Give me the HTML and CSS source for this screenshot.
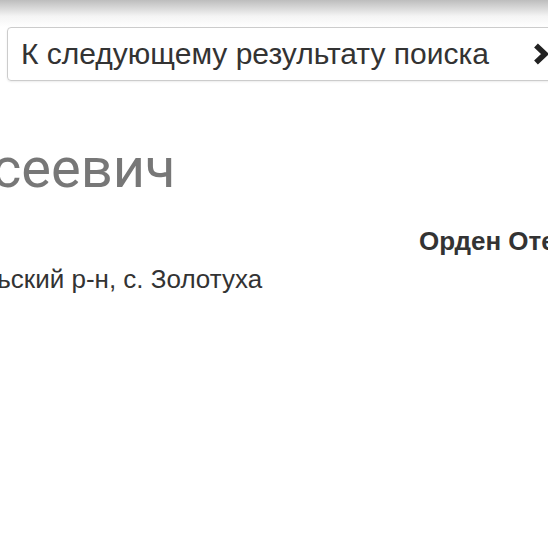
FILE: index.html
```html
<!DOCTYPE html>
<html lang="ru">
<head>
    <meta charset="UTF-8">
    <title>Результаты поиска</title>
    <link rel="stylesheet" href="styles.css">
</head>
<body>
    <div class="top-shadow"></div>

    <div class="pager">
        <a href="#" class="next-btn">К следующему результату поиска
            <svg class="chevron" width="16" height="22" viewBox="0 0 16 22"><path d="M3 2.5 L12 11 L3 19.5" fill="none" stroke="#222" stroke-width="5.5"/></svg>
        </a>
    </div>

    <div class="person">
        <div class="person-main">
            <h1 class="person-name">Алексеевич</h1>
            <p class="person-place">Курская обл., Рыльский р-н, с. Золотуха</p>
        </div>
        <div class="person-awards">
            <p class="award">Орден Отечественной войны II степени</p>
        </div>
    </div>
</body>
</html>
```

FILE: styles.css
```css
* {
    margin: 0;
    padding: 0;
    box-sizing: border-box;
}

body {
    font-family: "Liberation Sans", Arial, sans-serif;
    color: #333;
    background: #fff;
    width: 548px;
    height: 548px;
    overflow: hidden;
}

.top-shadow {
    height: 27px;
    background: linear-gradient(#bdbdbd, #f4f4f4 60%, #fff);
}

.pager {
    padding-left: 7px;
    white-space: nowrap;
}

.next-btn {
    display: inline-flex;
    align-items: center;
    gap: 44px;
    height: 54px;
    padding: 0 30px 0 13px;
    border: 1px solid #ccc;
    border-radius: 4px;
    box-shadow: 0 1px 2px rgba(0,0,0,0.08);
    font-size: 30px;
    color: #333;
    text-decoration: none;
}

.chevron {
    flex-shrink: 0;
}

.person {
    display: flex;
    white-space: nowrap;
    padding-top: 59px;
}

.person-main {
    width: 419px;
    flex-shrink: 0;
}

.person-name {
    font-family: Roboto, "Liberation Sans", sans-serif;
    font-weight: 400;
    font-size: 56px;
    line-height: 1;
    color: #777;
    margin-left: -137px;
}

.person-place {
    font-size: 26px;
    margin-top: 68px;
    margin-left: -222px;
}

.person-awards {
    padding-top: 86px;
}

.award {
    font-size: 26px;
    font-weight: bold;
}
```
